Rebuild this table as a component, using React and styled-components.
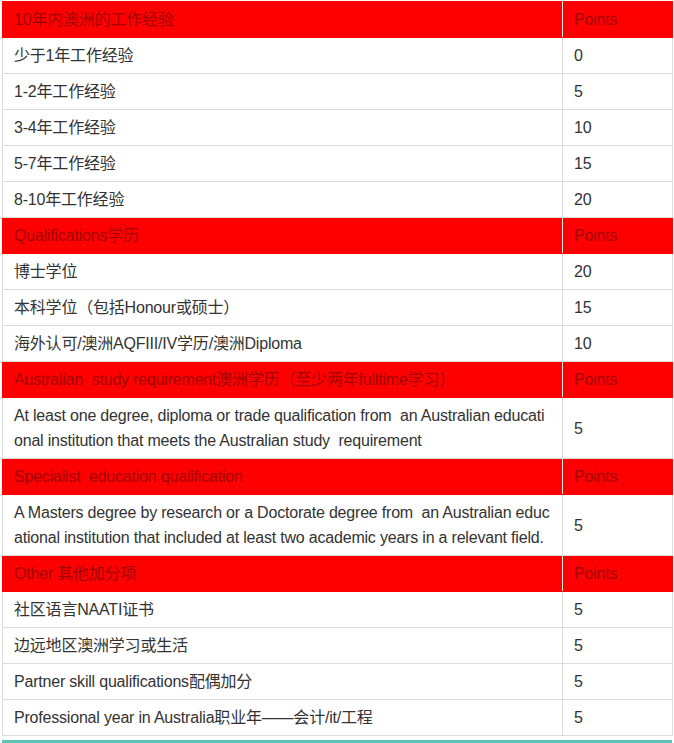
import React from "react";
import styled, { createGlobalStyle } from "styled-components";

const Global = createGlobalStyle`
  html, body { margin: 0; padding: 0; background: #fff; }
  body { font-family: "Liberation Sans", Arial, "Noto Sans CJK SC", sans-serif; }
`;

const Page = styled.div`
  padding: 1px 2px 0 2px;
  width: 674px;
  box-sizing: border-box;
`;

const Table = styled.table`
  width: 670px;
  border-collapse: collapse;
  table-layout: fixed;
  border: 1px solid #d8d8d8;
`;

const Col = styled.col`
  width: ${(p) => p.$w}px;
`;

const Cell = styled.td`
  border: 1px solid #dcdcdc;
  padding: 5px 11px;
  line-height: 25px;
  font-size: 16px;
  letter-spacing: -0.2px;
  color: #333;
  vertical-align: middle;
  white-space: pre;
  overflow: hidden;
`;

const HeadCell = styled(Cell)`
  background: #ff0000;
  color: #a30000;
  border-color: #ff0000;
  border-right-color: #e8e8e8;
  &:last-child { border-right-color: #ff0000; }
`;

const Footer = styled.div`
  margin-top: 4px;
  height: 3px;
  background: #5ec3b7;
`;

const Section = ({ title, rows }) => (
  <>
    <tr>
      <HeadCell>{title}</HeadCell>
      <HeadCell>Points</HeadCell>
    </tr>
    {rows.map(([label, pts], i) => (
      <tr key={i}>
        <Cell>
          {Array.isArray(label)
            ? label.map((l, j) => (
                <React.Fragment key={j}>
                  {j > 0 && <br />}
                  {l}
                </React.Fragment>
              ))
            : label}
        </Cell>
        <Cell>{pts}</Cell>
      </tr>
    ))}
  </>
);

const sections = [
  {
    title: "10年内澳洲的工作经验",
    rows: [
      ["少于1年工作经验", "0"],
      ["1-2年工作经验", "5"],
      ["3-4年工作经验", "10"],
      ["5-7年工作经验", "15"],
      ["8-10年工作经验", "20"],
    ],
  },
  {
    title: "Qualifications学历",
    rows: [
      ["博士学位", "20"],
      ["本科学位（包括Honour或硕士）", "15"],
      ["海外认可/澳洲AQFIII/IV学历/澳洲Diploma", "10"],
    ],
  },
  {
    title: "Australian  study requirement澳洲学历（至少两年fulltime学习）",
    rows: [
      [
        [
          "At least one degree, diploma or trade qualification from  an Australian educati",
          "onal institution that meets the Australian study  requirement",
        ],
        "5",
      ],
    ],
  },
  {
    title: "Specialist  education qualification",
    rows: [
      [
        [
          "A Masters degree by research or a Doctorate degree from  an Australian educ",
          "ational institution that included at least two academic years in a relevant field.",
        ],
        "5",
      ],
    ],
  },
  {
    title: "Other 其他加分项",
    rows: [
      ["社区语言NAATI证书", "5"],
      ["边远地区澳洲学习或生活", "5"],
      ["Partner skill qualifications配偶加分", "5"],
      ["Professional year in Australia职业年——会计/it/工程", "5"],
    ],
  },
];

export default function App() {
  return (
    <>
      <Global />
      <Page>
        <Table>
          <colgroup>
            <Col $w={560} />
            <Col $w={110} />
          </colgroup>
          <tbody>
            {sections.map((s, i) => (
              <Section key={i} title={s.title} rows={s.rows} />
            ))}
          </tbody>
        </Table>
        <Footer />
      </Page>
    </>
  );
}
